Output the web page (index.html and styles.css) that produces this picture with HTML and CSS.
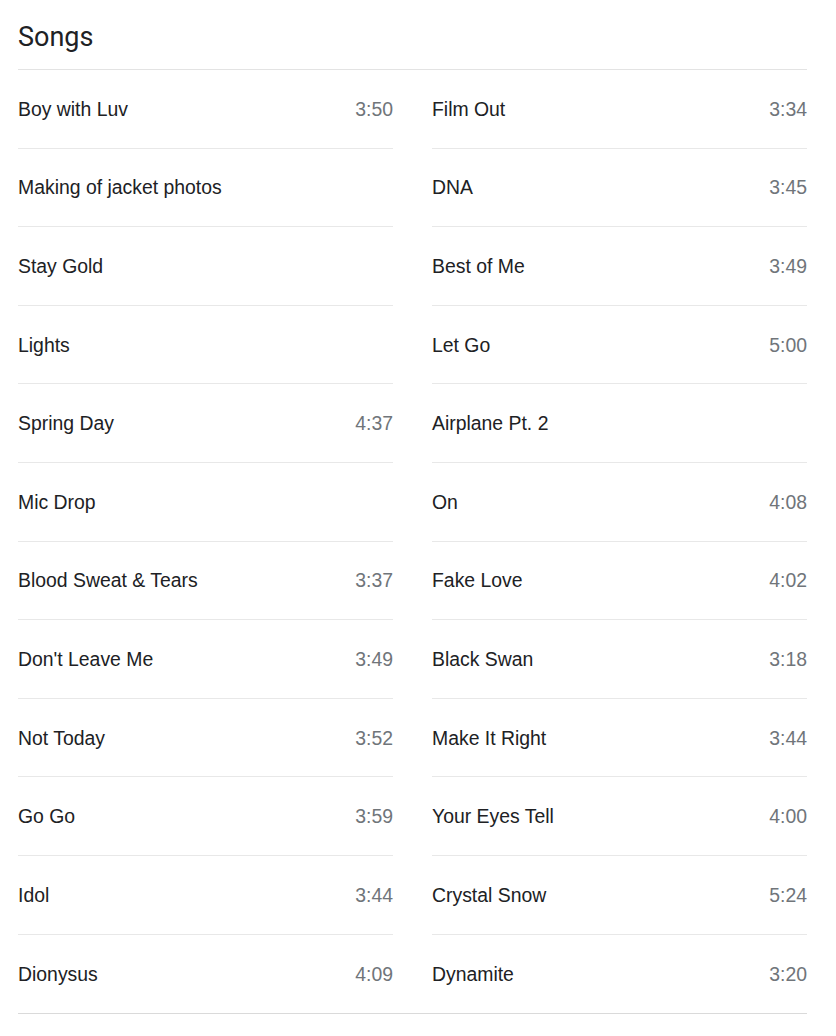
FILE: index.html
```html
<!DOCTYPE html>
<html>
<head>
<meta charset="utf-8">
<link rel="stylesheet" href="styles.css">
</head>
<body>
<div class="page">
  <h2 class="title">Songs</h2>
  <div class="list">
    <div class="row"><span class="name">Boy with Luv</span><span class="dur">3:50</span></div>
    <div class="row"><span class="name">Making of jacket photos</span><span class="dur"></span></div>
    <div class="row"><span class="name">Stay Gold</span><span class="dur"></span></div>
    <div class="row"><span class="name">Lights</span><span class="dur"></span></div>
    <div class="row"><span class="name">Spring Day</span><span class="dur">4:37</span></div>
    <div class="row"><span class="name">Mic Drop</span><span class="dur"></span></div>
    <div class="row"><span class="name">Blood Sweat &amp; Tears</span><span class="dur">3:37</span></div>
    <div class="row"><span class="name">Don't Leave Me</span><span class="dur">3:49</span></div>
    <div class="row"><span class="name">Not Today</span><span class="dur">3:52</span></div>
    <div class="row"><span class="name">Go Go</span><span class="dur">3:59</span></div>
    <div class="row"><span class="name">Idol</span><span class="dur">3:44</span></div>
    <div class="row last"><span class="name">Dionysus</span><span class="dur">4:09</span></div>
    <div class="row"><span class="name">Film Out</span><span class="dur">3:34</span></div>
    <div class="row"><span class="name">DNA</span><span class="dur">3:45</span></div>
    <div class="row"><span class="name">Best of Me</span><span class="dur">3:49</span></div>
    <div class="row"><span class="name">Let Go</span><span class="dur">5:00</span></div>
    <div class="row"><span class="name">Airplane Pt. 2</span><span class="dur"></span></div>
    <div class="row"><span class="name">On</span><span class="dur">4:08</span></div>
    <div class="row"><span class="name">Fake Love</span><span class="dur">4:02</span></div>
    <div class="row"><span class="name">Black Swan</span><span class="dur">3:18</span></div>
    <div class="row"><span class="name">Make It Right</span><span class="dur">3:44</span></div>
    <div class="row"><span class="name">Your Eyes Tell</span><span class="dur">4:00</span></div>
    <div class="row"><span class="name">Crystal Snow</span><span class="dur">5:24</span></div>
    <div class="row last"><span class="name">Dynamite</span><span class="dur">3:20</span></div>
  </div>
</div>
</body>
</html>
```
FILE: styles.css
```css
html, body {
  margin: 0;
  padding: 0;
  background: #fff;
}
.page {
  width: 789px;
  margin-left: 18px;
  font-family: "Liberation Sans", Arial, sans-serif;
  color: #202124;
}
.title {
  margin: 0;
  padding: 21px 0 16px;
  font-family: Roboto, "Liberation Sans", Arial, sans-serif;
  font-size: 27px;
  line-height: 32px;
  font-weight: 400;
  color: #202124;
}
.list {
  display: grid;
  grid-template-columns: 375px 375px;
  grid-template-rows: repeat(12, 78.6px);
  grid-auto-flow: column;
  column-gap: 39px;
  border-top: 1px solid #e3e3e3;
  border-bottom: 1px solid #dadada;
}
.row {
  display: flex;
  align-items: center;
  justify-content: space-between;
  border-bottom: 1px solid #e8e8e8;
  box-sizing: border-box;
  font-size: 19.4px;
  padding-top: 1px;
}
.row.last {
  border-bottom: none;
}
.name {
  color: #202124;
}
.dur {
  color: #70757a;
}
```
